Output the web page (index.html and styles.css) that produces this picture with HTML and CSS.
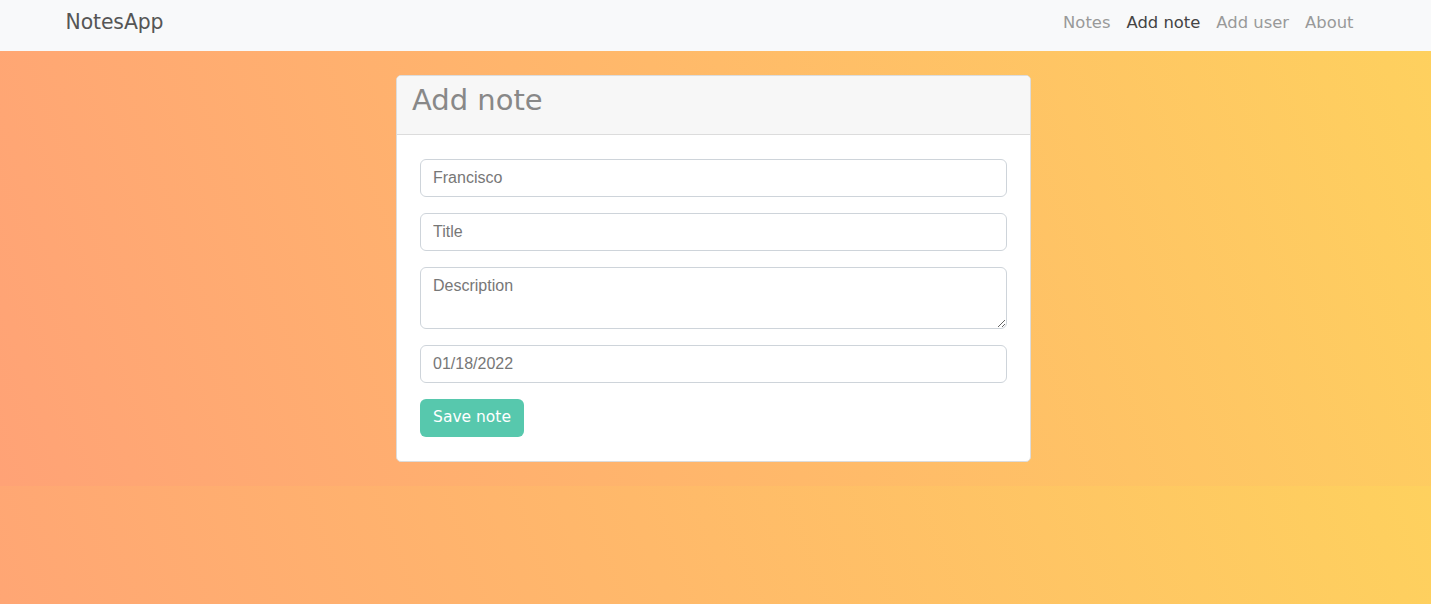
FILE: index.html
```html
<!DOCTYPE html>
<html lang="en">
<head>
<meta charset="utf-8">
<title>NotesApp</title>
<link rel="stylesheet" href="styles.css">
</head>
<body>
<nav class="navbar">
  <div class="nav-inner">
    <a class="brand" href="#">NotesApp</a>
    <ul class="nav-links">
      <li><a class="nav-link" href="#">Notes</a></li>
      <li><a class="nav-link active" href="#">Add note</a></li>
      <li><a class="nav-link" href="#">Add user</a></li>
      <li><a class="nav-link" href="#">About</a></li>
    </ul>
  </div>
</nav>
<main class="page">
  <section class="card">
    <header class="card-header"><h1>Add note</h1></header>
    <form class="card-body">
      <input class="field" type="text" placeholder="Francisco">
      <input class="field" type="text" placeholder="Title">
      <textarea class="field area" placeholder="Description"></textarea>
      <input class="field" type="text" placeholder="01/18/2022">
      <div><button class="btn" type="button">Save note</button></div>
    </form>
  </section>
</main>
</body>
</html>
```
FILE: styles.css
```css
* { box-sizing: border-box; }
html, body { margin: 0; padding: 0; }
body {
  background: linear-gradient(70deg, #ffa276 0%, #ffb96a 50%, #fed15e 100%);
  font-family: "DejaVu Sans", sans-serif;
}
.navbar {
  background: #f8f9fa;
  height: 51px;
}
.nav-inner {
  width: 1320px;
  margin: 0 auto;
  padding: 0 12px 7px;
  height: 51px;
  display: flex;
  align-items: center;
  justify-content: space-between;
}
.brand {
  font-size: 20.4px;
  color: #555;
  text-decoration: none;
  margin-left: -2px;
  letter-spacing: -0.1px;
}
.nav-links {
  list-style: none;
  margin: 0 2px 0 0;
  padding: 0;
  display: flex;
}
.nav-link {
  display: block;
  padding: 0 8px;
  font-size: 16.4px;
  color: #999;
  text-decoration: none;
}
.nav-link.active { color: #444; }
.page {
  display: flex;
  padding: 24px 0 24px 396px;
}
.card {
  width: 635px;
  background: #fff;
  border: 1px solid #dcdcdc;
  border-radius: 5px;
  overflow: hidden;
}
.card-header {
  background: #f7f7f7;
  border-bottom: 1px solid #dcdcdc;
  height: 59px;
  padding: 0 15px;
  display: flex;
  align-items: center;
}
.card-header h1 {
  margin: 0 0 11px;
  font-size: 29px;
  font-weight: normal;
  color: #888;
}
.card-body {
  padding: 24px 23px 24px 23px;
  display: flex;
  flex-direction: column;
  gap: 16px;
}
.field {
  display: block;
  width: 100%;
  height: 38px;
  border: 1px solid #ced4da;
  border-radius: 6px;
  padding: 6px 12px;
  font-family: "Liberation Sans", Arial, sans-serif;
  font-size: 16px;
  color: #6c757d;
  background: #fff;
  margin: 0;
}
.field::placeholder { color: #777; opacity: 1; }
.area {
  height: 62px;
  resize: vertical;
  line-height: 1.5;
}
.btn {
  height: 38px;
  width: 104px;
  border: none;
  border-radius: 6px;
  background: #57c8ad;
  color: #fff;
  font-family: "DejaVu Sans", sans-serif;
  font-size: 15.5px;
  padding: 0 0 2px;
}
```
